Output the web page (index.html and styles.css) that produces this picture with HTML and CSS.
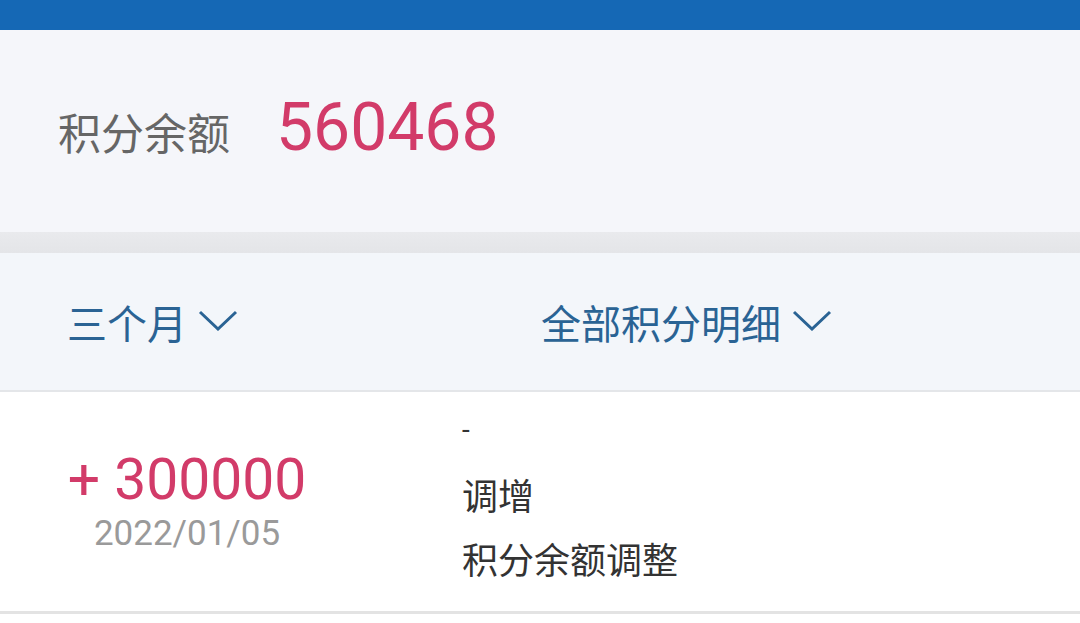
FILE: index.html
```html
<!DOCTYPE html>
<html lang="zh-CN">
<head>
<meta charset="utf-8">
<title>积分余额</title>
<link rel="stylesheet" href="styles.css">
</head>
<body>
<div class="topbar"></div>
<section class="balance">
  <span class="balance-label">积分余额</span>
  <span class="balance-value">560468</span>
</section>
<div class="divider"></div>
<nav class="filters">
  <div class="filter">
    <span>三个月</span>
    <svg class="chevron" width="40" height="22" viewBox="0 0 40 22"><polyline points="2,3 20,20 38,3" fill="none" stroke="currentColor" stroke-width="3"/></svg>
  </div>
  <div class="filter">
    <span>全部积分明细</span>
    <svg class="chevron" width="40" height="22" viewBox="0 0 40 22"><polyline points="2,3 20,20 38,3" fill="none" stroke="currentColor" stroke-width="3"/></svg>
  </div>
</nav>
<section class="record">
  <div class="record-left">
    <div class="record-amount">+ 300000</div>
    <div class="record-date">2022/01/05</div>
  </div>
  <div class="record-right">
    <div class="record-line record-dash">-</div>
    <div class="record-line">调增</div>
    <div class="record-line">积分余额调整</div>
  </div>
</section>
</body>
</html>
```

FILE: styles.css
```css
html, body {
  margin: 0;
  padding: 0;
  background: #ffffff;
}
body {
  width: 1080px;
  height: 623px;
  overflow: hidden;
  font-family: Roboto, "Noto Sans CJK SC", sans-serif;
}
.topbar {
  height: 30px;
  background: #1568b5;
}
.balance {
  height: 202px;
  background: #f5f6fa;
  display: flex;
  align-items: center;
  padding-left: 58px;
  box-sizing: border-box;
}
.balance-label {
  font-size: 43px;
  color: #666666;
  font-family: "Noto Sans CJK SC", sans-serif;
}
.balance-value {
  font-size: 66px;
  color: #d23b69;
  margin-left: 46px;
  margin-top: -8px;
}
.divider {
  height: 21px;
  background: linear-gradient(#e9eaed, #e4e5e8);
}
.filters {
  height: 139px;
  background: #f3f6fa;
  border-bottom: 2px solid #e4e6e9;
  box-sizing: border-box;
  display: grid;
  grid-template-columns: 474px 1fr;
  align-items: center;
  padding-left: 67px;
  color: #2a6394;
}
.filter {
  display: flex;
  align-items: center;
  gap: 11px;
  font-family: "Noto Sans CJK SC", sans-serif;
  font-size: 40px;
}
.chevron {
  color: #2a6394;
  margin-top: -4px;
}
.record {
  height: 222px;
  background: #ffffff;
  border-bottom: 3px solid #e3e3e3;
  box-sizing: border-box;
  display: flex;
}
.record-left {
  width: 374px;
  display: flex;
  flex-direction: column;
  justify-content: center;
  align-items: center;
  text-align: center;
}
.record-amount {
  font-size: 57px;
  line-height: 64px;
  color: #d23b69;
}
.record-date {
  font-size: 35px;
  line-height: 44px;
  color: #9a9a9a;
}
.record-right {
  padding-left: 88px;
  padding-top: 6px;
  color: #333333;
  font-family: "Noto Sans CJK SC", sans-serif;
  font-size: 36px;
}
.record-line {
  line-height: 64px;
}
.record-dash {
  font-family: Roboto, sans-serif;
  font-size: 28px;
}
```
